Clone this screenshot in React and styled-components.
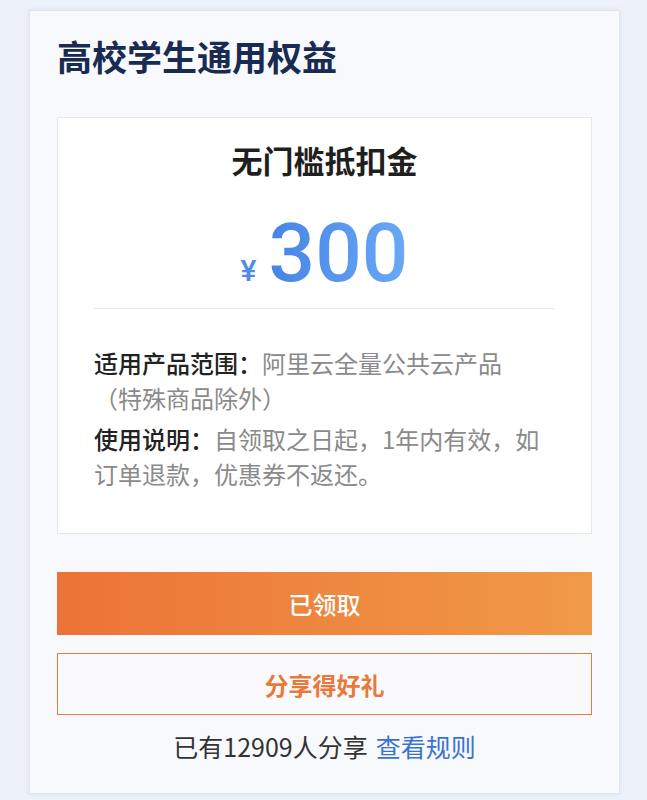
import React from 'react';
import styled, { createGlobalStyle } from 'styled-components';

const GlobalStyle = createGlobalStyle`
  body {
    margin: 0;
    background: #edf1fa;
    font-family: "Noto Sans CJK SC", "Noto Sans", sans-serif;
  }
`;

const Page = styled.div`
  padding: 10px 27px 7px 29px;
`;

const Card = styled.section`
  background: #f8f9fd;
  border: 1px solid #e2e5ec;
  box-shadow: 0 0 6px rgba(40, 60, 110, 0.08);
  padding: 21px 27px 30px 27px;
`;

const Heading = styled.h1`
  margin: 0 0 37px;
  font-size: 35px;
  line-height: 48px;
  font-weight: 700;
  color: #1a2b52;
`;

const Coupon = styled.div`
  background: #fff;
  border: 1px solid #e7e8ed;
  padding: 21px 36px 36px;
`;

const CouponTitle = styled.h2`
  margin: 0;
  text-align: center;
  font-size: 31px;
  line-height: 42px;
  font-weight: 700;
  color: #1f1f1f;
`;

const Amount = styled.div`
  display: flex;
  justify-content: center;
  align-items: baseline;
  margin-top: 31px;
  color: #4d8ae6;
`;

const Yen = styled.span`
  font-family: Roboto, "Noto Sans", sans-serif;
  font-size: 30px;
  font-weight: 500;
  margin-right: 12px;
  color: #4f8ce6;
`;

const Number = styled.span`
  font-family: Roboto, "Noto Sans", sans-serif;
  font-size: 82px;
  line-height: 82px;
  font-weight: 500;
  background: linear-gradient(90deg, #4684e6 0%, #6aa9f5 100%);
  -webkit-background-clip: text;
  background-clip: text;
  color: transparent;
`;

const Divider = styled.hr`
  margin: 14px 0 36px;
  border: 0;
  border-top: 1px solid #e6e8ed;
`;

const Rule = styled.p`
  margin: 0 0 6px;
  font-size: 24px;
  line-height: 35px;
  color: #8a8a8a;
`;

const Label = styled.span`
  color: #222;
  font-weight: 500;
`;

const Button = styled.button`
  display: block;
  width: 100%;
  height: ${(p) => (p.$filled ? '63px' : '62px')};
  margin: ${(p) => (p.$filled ? '38px 0 18px' : '0')};
  border: ${(p) => (p.$filled ? 'none' : '1.5px solid #ec7d3f')};
  background: ${(p) =>
    p.$filled ? 'linear-gradient(90deg, #ec7337 0%, #f09a47 100%)' : '#fafafd'};
  color: ${(p) => (p.$filled ? '#fff' : '#e8793a')};
  font-family: "Noto Sans CJK SC", "Noto Sans", sans-serif;
  font-size: 24px;
  font-weight: ${(p) => (p.$filled ? 500 : 700)};
  cursor: pointer;
`;

const Footer = styled.p`
  margin: 14px 0 0;
  text-align: center;
  font-size: 25px;
  line-height: 34px;
  color: #333;
`;

const Link = styled.a`
  color: #3a72d4;
  text-decoration: none;
  margin-left: 8px;
`;

export default function App() {
  return (
    <Page>
      <GlobalStyle />
      <Card>
        <Heading>高校学生通用权益</Heading>
        <Coupon>
          <CouponTitle>无门槛抵扣金</CouponTitle>
          <Amount>
            <Yen>¥</Yen>
            <Number>300</Number>
          </Amount>
          <Divider />
          <Rule>
            <Label>适用产品范围：</Label>阿里云全量公共云产品
            <br />
            （特殊商品除外）
          </Rule>
          <Rule>
            <Label>使用说明：</Label>自领取之日起，1年内有效，如订单退款，优惠券不返还。
          </Rule>
        </Coupon>
        <Button $filled>已领取</Button>
        <Button>分享得好礼</Button>
        <Footer>
          已有12909人分享<Link href="#">查看规则</Link>
        </Footer>
      </Card>
    </Page>
  );
}
